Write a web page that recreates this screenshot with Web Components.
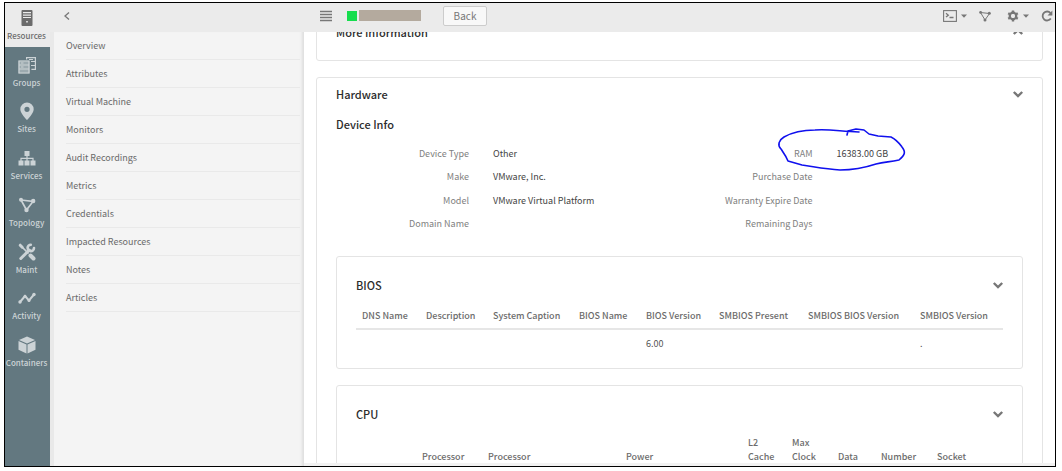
<!DOCTYPE html>
<html lang="en">
<head>
<meta charset="utf-8">
<title>Resource details</title>
<style>
html,body{margin:0;height:100%}
body{background:#fff;font-family:"Noto Sans CJK SC","Noto Sans",sans-serif;font-size:9px;line-height:14px;color:#555}
</style>
</head>
<body>
<resource-app></resource-app>
<script>
// Registers an element; setup fills the cloned markup before it is attached.
const define = (name, html, setup) => customElements.define(name, class extends HTMLElement {
  connectedCallback() {
    if (this.shadowRoot) return;
    const t = document.createElement('template');
    t.innerHTML = '<style>:host,*{box-sizing:border-box}</style>' + html;
    const content = t.content.cloneNode(true);
    if (setup) setup.call(this, content);
    this.attachShadow({ mode: 'open' }).append(content);
  }
});

const icons = {
  server: ['0 0 18 18', '<path fill="currentColor" fill-rule="evenodd" d="M4.500 1h9a1 1 0 0 1 1 1v14a1 1 0 0 1-1 1h-9a1 1 0 0 1-1-1V2a1 1 0 0 1 1-1zM5 3v1.200h8V3zM5 5.500v1.200h8V5.500zM5 8v1h8V8zM8.200 12v1.600h1.600V12z"/>'],
  groups: ['0 0 18 18', '<g fill="none" stroke="currentColor" stroke-width="1.200"><path d="M8.600 3.500V1.600h8.800v11.800h-4M13 5.500h4.400M13 9.500h4.400M11 3.500h4"/></g><rect x=".5" y="4.500" width="11" height="13" fill="currentColor" opacity=".55"/><path fill="none" stroke="currentColor" stroke-width="1.200" d="M1 5h10v12H1zM1 9h10M1 13h10M3 7h2.500M3 11h2.500"/>'],
  pin: ['0 0 18 18', '<path fill="currentColor" fill-rule="evenodd" d="M9 .5a6.700 6.700 0 0 0-6.700 6.700C2.300 11.500 9 18 9 18s6.700-6.500 6.700-10.800A6.700 6.700 0 0 0 9 .5zM9 4.700a2.600 2.600 0 1 1 0 5.200 2.600 2.600 0 0 1 0-5.200z"/>'],
  sitemap: ['0 0 18 18', '<path fill="currentColor" d="M6.500 2h5v5h-5zM.5 11.500h5v5h-5zM6.500 11.500h5v5h-5zM12.500 11.500h5v5h-5z"/><path fill="none" stroke="currentColor" stroke-width="1.200" d="M9 7v5M3 12V9.300h12V12"/>'],
  topology: ['0 0 18 18', '<path fill="none" stroke="currentColor" stroke-width="1.700" d="M3 4l12 1.500L8.500 14z"/><g fill="currentColor"><circle cx="3" cy="3.800" r="2"/><circle cx="15.200" cy="5" r="2.200"/><circle cx="8.500" cy="14" r="2.200"/></g>'],
  tools: ['0 0 18 18', '<g fill="none" stroke="currentColor" stroke-linecap="round"><path stroke-width="3" d="M2.800 15.500l8.500-8.500"/><path stroke-width="2.600" d="M16 5a3.200 3.200 0 1 1-3.200-3.300"/><path stroke-width="1.700" d="M3 3l7 7"/><path stroke-width="3" d="M2.200 2.200l2 2"/><path stroke-width="4" d="M12.500 12.500l3 3"/></g>'],
  activity: ['0 0 18 18', '<path fill="none" stroke="currentColor" stroke-width="2" d="M2 13l5-6 4 4.500L16 5.500"/><g fill="currentColor"><circle cx="2" cy="13" r="1.700"/><circle cx="7" cy="7.200" r="1.500"/><circle cx="11" cy="11.500" r="1.500"/><circle cx="16" cy="5.500" r="1.700"/></g>'],
  cube: ['0 0 18 18', '<path fill="currentColor" d="M9 .5l8 3.400-8 3.700-8-3.700zM.5 5l8 3.600v9L.5 13.800zM17.500 5l-8 3.600v9l8-3.800z"/>'],
  left: ['0 0 10 10', '<path fill="none" stroke="currentColor" stroke-width="1.300" d="M7 1.500L3 5l4 3.500"/>'],
  menu: ['0 0 12 12', '<path stroke="currentColor" stroke-width="1.400" d="M0 1.500h12M0 4.500h12M0 7.500h12M0 10.500h12"/>'],
  terminal: ['0 0 14 12', '<g fill="none" stroke="currentColor"><rect x=".6" y=".6" width="12.800" height="10.800" stroke-width="1.100"/><path stroke-width="1.300" d="M3 3.300l2.300 1.900L3 7.100M6.500 7.500h4"/></g>'],
  caret: ['0 0 6 4', '<path fill="currentColor" d="M0 .5h6L3 3.700z"/>'],
  graph: ['0 0 12 12', '<path fill="none" stroke="currentColor" stroke-width="1" d="M1.500 2.500l9 1L6 10z"/><g fill="currentColor"><circle cx="1.600" cy="2.400" r="1.400"/><circle cx="10.300" cy="3.300" r="1.500"/><circle cx="6" cy="10" r="1.500"/></g>'],
  gear: ['0 0 12 12', '<circle cx="6" cy="6" r="3.200" fill="none" stroke="currentColor" stroke-width="2.400"/><path stroke="currentColor" stroke-width="2.400" d="M6 .5v2M6 9.500v2M1.200 3.200l1.800 1M9 7.800l1.800 1M1.200 8.800l1.800-1M9 4.200l1.800-1"/><circle cx="6" cy="6" r="1.900" fill="#ebebeb"/>'],
  refresh: ['0 0 12 12', '<path fill="none" stroke="currentColor" stroke-width="1.800" d="M9.800 8.600A4.500 4.500 0 1 1 9.500 3"/><path fill="currentColor" d="M11.400.5v5H6.500z"/>'],
  down: ['0 0 12 12', '<path fill="none" stroke="currentColor" stroke-width="2.400" d="M1.800 4L6 8l4.200-4"/>'],
  up: ['0 0 12 12', '<path fill="none" stroke="currentColor" stroke-width="2.400" d="M1.800 8L6 4l4.200 4"/>']
};

define('ui-icon', '<style>:host{display:block;flex:none;line-height:0}svg{display:block;width:100%;height:100%}</style><svg aria-hidden="true"></svg>', function (root) {
  const [box, body] = icons[this.getAttribute('name')];
  const svg = root.querySelector('svg');
  svg.setAttribute('viewBox', box);
  svg.innerHTML = body;
});

define('rail-item', `<style>
:host{display:block;color:#ccd3d6;min-width:0}
:host([active]){background:#ebebeb;color:#6b6b6b}
a{height:100%;display:flex;flex-direction:column;align-items:center;justify-content:flex-end;gap:2px;padding:0 2px 4px 0;color:inherit;text-decoration:none;white-space:nowrap;font-size:8px;font-weight:500}
ui-icon{width:18px;height:18px}
</style><a href="#"><ui-icon></ui-icon><slot></slot></a>`, function (root) {
  root.querySelector('ui-icon').setAttribute('name', this.getAttribute('icon'));
});

define('side-rail', `<style>
:host{display:block;background:#637880;width:45px}
nav{display:grid;grid-template-rows:44px repeat(7,1fr);grid-template-columns:100%;height:371px}
</style><nav aria-label="Main">
<rail-item icon="server" active>Resources</rail-item><rail-item icon="groups">Groups</rail-item><rail-item icon="pin">Sites</rail-item><rail-item icon="sitemap">Services</rail-item><rail-item icon="topology">Topology</rail-item><rail-item icon="tools">Maint</rail-item><rail-item icon="activity">Activity</rail-item><rail-item icon="cube">Containers</rail-item></nav>`);

define('side-link', `<style>
:host{display:block;border-bottom:1px solid #e9e9e9}
a{display:block;line-height:27px;color:#6a6a6a;text-decoration:none}
</style><a href="#"><slot></slot></a>`);

define('side-menu', `<style>
:host{display:flex;flex-direction:column;width:254px;background:#e9e9e9}
header{height:29px;background:#ebebeb;display:flex;align-items:center;padding:0 12px 4px}
button{border:0;background:none;padding:0;color:#777}
ui-icon{width:10px;height:10px}
nav{flex:1;margin-left:4px;padding-left:12px;padding-right:4px;background:#f4f4f4;box-shadow:inset -4px 0 3px -2px #dedede}
</style><header><button aria-label="Collapse menu"><ui-icon name="left"></ui-icon></button></header>
<nav aria-label="Resource">
<side-link>Overview</side-link><side-link>Attributes</side-link><side-link>Virtual Machine</side-link><side-link>Monitors</side-link><side-link>Audit Recordings</side-link><side-link>Metrics</side-link><side-link>Credentials</side-link><side-link>Impacted Resources</side-link><side-link>Notes</side-link><side-link>Articles</side-link></nav>`);

define('top-bar', `<style>
:host{display:flex;align-items:center;height:29px;background:#ebebeb;color:#777;padding:0 2px 4px 16px}
button{border:0;background:none;padding:0;color:inherit;font:inherit;display:flex;align-items:center;gap:4px}
.menu ui-icon,.ic{width:12px;height:12px}
.state{width:10px;height:10px;background:#16dd4e;margin-left:15px}
.name{width:62px;height:11px;background:#b4aa9e;margin-left:2px}
.back{margin-left:22px;width:44px;height:20px;justify-content:center;border:1px solid #ccc;border-radius:2px;background:#f8f8f8;font-size:10px}
.tools{margin-left:auto;display:flex;align-items:center;gap:12px}
.term{width:14px;height:12px}.caret{width:6px;height:4px}
.gear{margin-left:4px}
</style>
<button class="menu" aria-label="Menu"><ui-icon name="menu"></ui-icon></button>
<span class="state"></span><span class="name"></span><button class="back">Back</button>
<div class="tools"><button aria-label="Console"><ui-icon class="term" name="terminal"></ui-icon><ui-icon class="caret" name="caret"></ui-icon></button>
<button aria-label="Topology"><ui-icon class="ic" name="graph"></ui-icon></button>
<button class="gear" aria-label="Settings"><ui-icon class="ic" name="gear"></ui-icon><ui-icon class="caret" name="caret"></ui-icon></button>
<button aria-label="Refresh"><ui-icon class="ic" name="refresh"></ui-icon></button></div>`);

define('info-card', `<style>
:host{display:block;border:1px solid #e4e4e4;border-radius:3px;padding:7px 19px 19px;background:#fff}
:host([inner]){padding-top:19px;padding-bottom:12px}
header{display:flex;align-items:center;justify-content:space-between;height:18px}
h2{margin:0;font-size:11px;line-height:18px;font-weight:500;color:#2c2c2c}
button{border:0;background:none;padding:0;color:#777;margin-right:-1px}
ui-icon{width:12px;height:12px}
</style><header><h2></h2><button aria-label="Toggle section"><ui-icon></ui-icon></button></header><slot></slot>`, function (root) {
  root.querySelector('h2').textContent = this.getAttribute('heading');
  root.querySelector('ui-icon').setAttribute('name', this.getAttribute('icon') || 'down');
});

define('device-info', `<style>
:host{display:block}
h3{margin:12px 0 9px;font-size:11px;line-height:18px;font-weight:500;color:#2c2c2c}
.cols{display:grid;grid-template-columns:1fr 1fr;height:94px}
dl{margin:0;display:grid;grid-template-columns:133px 1fr;column-gap:24px;grid-template-rows:repeat(4,1fr);align-items:center}
dt{text-align:right;color:#808080}
dd{margin:0;color:#444}
.ram{position:relative}
svg{position:absolute;left:-60px;top:-20px;width:130px;height:44px;overflow:visible}
</style><h3>Device Info</h3><div class="cols">
<dl><dt>Device Type</dt><dd>Other</dd><dt>Make</dt><dd>VMware, Inc.</dd><dt>Model</dt><dd>VMware Virtual Platform</dd><dt>Domain Name</dt><dd></dd></dl>
<dl><dt>RAM</dt><dd class="ram">16383.00 GB<svg viewBox="0 0 130 44" aria-hidden="true"><path fill="none" stroke="#1010ee" stroke-width="1.600" stroke-linecap="round" stroke-linejoin="round" d="M70 8l1-4 8-2 8 1 5 4 9 2 13 1c6 3 8 6 11 10 4 5 3 8-3 13-10 2-14 2-23 4-12 4-24 6-36 6-15-1-24-3-38-5L11 34c-2-5-5-9-7-12-4-4-2-9 3-12 7-4 18-7 31-7 14-1 23 1 44 2"/></svg></dd><dt>Purchase Date</dt><dd></dd><dt>Warranty Expire Date</dt><dd></dd><dt>Remaining Days</dt><dd></dd></dl></div>`);

define('data-grid', `<style>
:host{display:block;margin-top:8px}
table{width:100%;border-collapse:collapse;table-layout:fixed}
th,td{text-align:left;padding:0 0 5px 6px;vertical-align:bottom;font-weight:400;height:27px}
th{font-weight:500;color:#6c6c6c;border-bottom:2px solid #e6e6e6}
td{color:#555}
</style><table><colgroup></colgroup><thead><tr></tr></thead><tbody></tbody></table>`, function (root) {
  const make = (tag, text, parent) => {
    const el = document.createElement(tag);
    text.split('/').forEach((part, i) => { if (i) el.append(document.createElement('br')); el.append(part); });
    parent.append(el);
    return el;
  };
  this.getAttribute('widths').split(' ').forEach(w => { make('col', '', root.querySelector('colgroup')).style.width = w + 'px'; });
  this.getAttribute('heads').split('|').forEach(h => make('th', h, root.querySelector('thead tr')));
  if (this.hasAttribute('row')) {
    const tr = make('tr', '', root.querySelector('tbody'));
    this.getAttribute('row').split('|').forEach(v => make('td', v, tr));
  }
});

define('detail-view', `<style>
:host{display:block;overflow:hidden;min-height:0;background:#fff;border-bottom:3px solid #f2f2f2}
.scrolled{margin:-17px 12px 0;display:flex;flex-direction:column;gap:16px}
.hw{flex:none}
.bios{margin-top:20px}
.cpu{margin-top:16px}
.cpu data-grid{margin-top:13px}
</style><div class="scrolled">
<info-card heading="More Information" icon="up"></info-card>
<info-card class="hw" heading="Hardware"><device-info></device-info>
<info-card class="bios" inner heading="BIOS"><data-grid widths="64 67 86 67 73 89 112 89" heads="DNS Name|Description|System Caption|BIOS Name|BIOS Version|SMBIOS Present|SMBIOS BIOS Version|SMBIOS Version" row="||||6.00|||."></data-grid></info-card>
<info-card class="cpu" inner heading="CPU"><data-grid widths="60 66 138 122 44 46 43 56 72" heads="|Processor|Processor|Power|L2/Cache|Max/Clock|Data|Number|Socket"></data-grid></info-card>
</info-card></div>`);

define('resource-app', `<style>
:host{display:block;height:100vh;padding:2px 6px 4px 4px}
.frame{height:100%;border:1px solid #000;display:grid;grid-template-columns:auto auto minmax(0,1fr);grid-template-rows:minmax(0,1fr);overflow:hidden}
main{display:flex;flex-direction:column;min-height:0;min-width:0}
top-bar{flex:none}
detail-view{flex:1}
</style><div class="frame"><side-rail></side-rail><side-menu></side-menu><main><top-bar></top-bar><detail-view></detail-view></main></div>`);
</script>
</body>
</html>
